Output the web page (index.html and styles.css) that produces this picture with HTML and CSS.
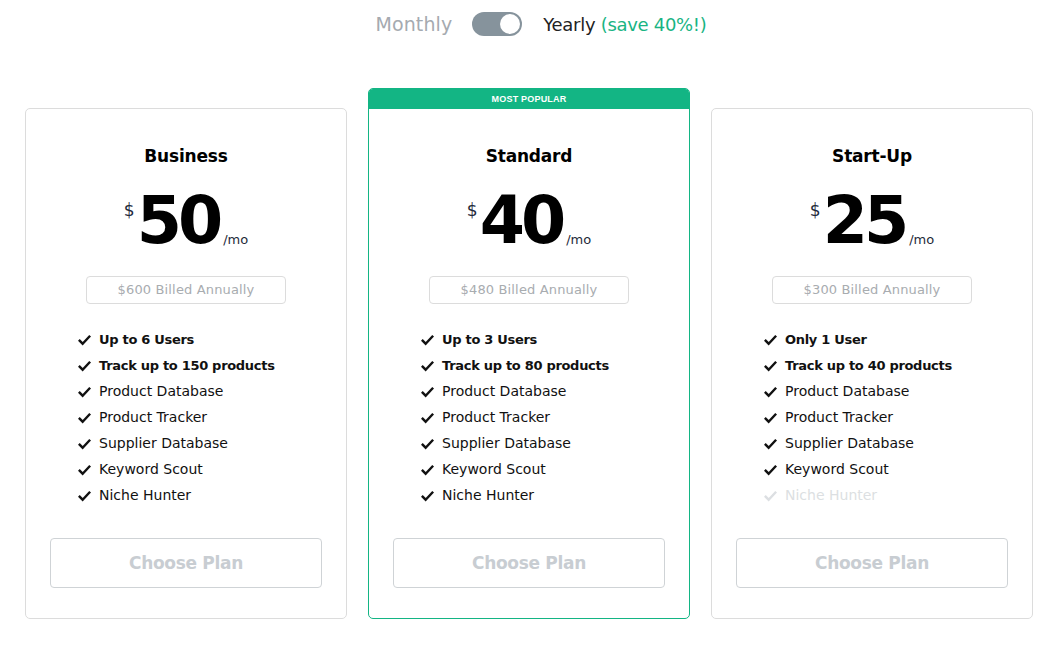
FILE: index.html
```html
<!DOCTYPE html>
<html>
<head>
<meta charset="utf-8">
<link rel="stylesheet" href="styles.css">
</head>
<body>
<div class="page">
  <div class="toggle-row">
    <span class="opt off">Monthly</span>
    <span class="switch"><span class="knob"></span></span>
    <span class="opt on">Yearly <span class="save">(save 40%!)</span></span>
  </div>
  <div class="cards">
    <div class="card">
      <div class="card-body">
        <h2 class="title">Business</h2>
        <div class="price"><span class="cur">$</span><span class="amt">50</span><span class="per">/mo</span></div>
        <div class="billed">$600 Billed Annually</div>
        <ul class="features">
          <li class="strong"><svg viewBox="0 0 16 16"><path d="M2 8.5 L6 12.5 L14 4"/></svg>Up to 6 Users</li>
          <li class="strong"><svg viewBox="0 0 16 16"><path d="M2 8.5 L6 12.5 L14 4"/></svg>Track up to 150 products</li>
          <li><svg viewBox="0 0 16 16"><path d="M2 8.5 L6 12.5 L14 4"/></svg>Product Database</li>
          <li><svg viewBox="0 0 16 16"><path d="M2 8.5 L6 12.5 L14 4"/></svg>Product Tracker</li>
          <li><svg viewBox="0 0 16 16"><path d="M2 8.5 L6 12.5 L14 4"/></svg>Supplier Database</li>
          <li><svg viewBox="0 0 16 16"><path d="M2 8.5 L6 12.5 L14 4"/></svg>Keyword Scout</li>
          <li><svg viewBox="0 0 16 16"><path d="M2 8.5 L6 12.5 L14 4"/></svg>Niche Hunter</li>
        </ul>
        <button class="choose">Choose Plan</button>
      </div>
    </div>
    <div class="card popular">
      <div class="banner">MOST POPULAR</div>
      <div class="card-body">
        <h2 class="title">Standard</h2>
        <div class="price"><span class="cur">$</span><span class="amt">40</span><span class="per">/mo</span></div>
        <div class="billed">$480 Billed Annually</div>
        <ul class="features">
          <li class="strong"><svg viewBox="0 0 16 16"><path d="M2 8.5 L6 12.5 L14 4"/></svg>Up to 3 Users</li>
          <li class="strong"><svg viewBox="0 0 16 16"><path d="M2 8.5 L6 12.5 L14 4"/></svg>Track up to 80 products</li>
          <li><svg viewBox="0 0 16 16"><path d="M2 8.5 L6 12.5 L14 4"/></svg>Product Database</li>
          <li><svg viewBox="0 0 16 16"><path d="M2 8.5 L6 12.5 L14 4"/></svg>Product Tracker</li>
          <li><svg viewBox="0 0 16 16"><path d="M2 8.5 L6 12.5 L14 4"/></svg>Supplier Database</li>
          <li><svg viewBox="0 0 16 16"><path d="M2 8.5 L6 12.5 L14 4"/></svg>Keyword Scout</li>
          <li><svg viewBox="0 0 16 16"><path d="M2 8.5 L6 12.5 L14 4"/></svg>Niche Hunter</li>
        </ul>
        <button class="choose">Choose Plan</button>
      </div>
    </div>
    <div class="card">
      <div class="card-body">
        <h2 class="title">Start-Up</h2>
        <div class="price"><span class="cur">$</span><span class="amt">25</span><span class="per">/mo</span></div>
        <div class="billed">$300 Billed Annually</div>
        <ul class="features">
          <li class="strong"><svg viewBox="0 0 16 16"><path d="M2 8.5 L6 12.5 L14 4"/></svg>Only 1 User</li>
          <li class="strong"><svg viewBox="0 0 16 16"><path d="M2 8.5 L6 12.5 L14 4"/></svg>Track up to 40 products</li>
          <li><svg viewBox="0 0 16 16"><path d="M2 8.5 L6 12.5 L14 4"/></svg>Product Database</li>
          <li><svg viewBox="0 0 16 16"><path d="M2 8.5 L6 12.5 L14 4"/></svg>Product Tracker</li>
          <li><svg viewBox="0 0 16 16"><path d="M2 8.5 L6 12.5 L14 4"/></svg>Supplier Database</li>
          <li><svg viewBox="0 0 16 16"><path d="M2 8.5 L6 12.5 L14 4"/></svg>Keyword Scout</li>
          <li class="disabled"><svg viewBox="0 0 16 16"><path d="M2 8.5 L6 12.5 L14 4"/></svg>Niche Hunter</li>
        </ul>
        <button class="choose">Choose Plan</button>
      </div>
    </div>
  </div>
</div>
</body>
</html>
```
FILE: styles.css
```css
* { box-sizing: border-box; }
html, body { margin: 0; padding: 0; background: #fff; }
body {
  font-family: "DejaVu Sans", "Open Sans", sans-serif;
  color: #000;
}
.page {
  width: 1057px;
  padding: 0 24px 0 25px;
}
.toggle-row {
  display: flex;
  align-items: center;
  justify-content: center;
  height: 48px;
  font-size: 18px;
  padding-left: 24px;
}
.opt.off { color: #a5aab0; font-size: 19px; letter-spacing: 0.1px; }
.opt.on { color: #222; letter-spacing: -0.3px; }
.save { color: #19b483; }
.switch {
  width: 50px;
  height: 24px;
  border-radius: 12px;
  background: #86939c;
  margin: 0 21px 0 20px;
  position: relative;
}
.knob {
  position: absolute;
  right: 2px;
  top: 2px;
  width: 20px;
  height: 20px;
  border-radius: 50%;
  background: #fff;
}
.cards {
  display: flex;
  gap: 21px;
  margin-top: 40px;
}
.card {
  width: 322px;
  margin-top: 20px;
  border: 1px solid #dcdcdc;
  border-radius: 5px;
  height: 511px;
}
.card.popular {
  margin-top: 0;
  height: 531px;
  border-color: #13b584;
  overflow: hidden;
}
.banner {
  height: 20px;
  background: #13b584;
  color: #fff;
  font-size: 9px;
  font-weight: 600;
  letter-spacing: 0.2px;
  text-align: center;
  line-height: 21px;
  font-family: "Liberation Sans", Arial, sans-serif;
}
.card-body {
  padding: 35px 24px 0 24px;
  display: flex;
  flex-direction: column;
  align-items: center;
}
.title {
  margin: 0;
  font-size: 17px;
  font-weight: 700;
  line-height: 24px;
  letter-spacing: -0.2px;
}
.price {
  display: flex;
  align-items: flex-start;
  margin-top: 16px;
  height: 89px;
}
.cur {
  font-size: 17px;
  margin-top: 16px;
  color: #1e2a3a;
  margin-right: 2px;
}
.amt {
  font-size: 65px;
  font-weight: 700;
  line-height: 73px;
  letter-spacing: -4px;
  margin-right: 4px;
}
.per {
  font-size: 13px;
  align-self: flex-end;
  margin-bottom: 26px;
  color: #1e2a3a;
}
.billed {
  width: 200px;
  height: 28px;
  margin-top: 3px;
  border: 1px solid #dcdcdc;
  border-radius: 4px;
  text-align: center;
  line-height: 26px;
  font-size: 13px;
  letter-spacing: 0.15px;
  color: #a8acb0;
}
.features {
  list-style: none;
  margin: 22px 0 0 0;
  padding: 0 0 0 27px;
  align-self: stretch;
}
.features li {
  display: flex;
  align-items: center;
  height: 26px;
  font-size: 14px;
  color: #111;
}
.features li.strong {
  font-weight: 700;
  font-size: 13px;
  letter-spacing: -0.3px;
}
.features li.disabled { color: #dcdfe2; }
.features svg {
  width: 15px;
  height: 15px;
  margin-right: 7px;
  flex: none;
}
.features svg path {
  fill: none;
  stroke: currentColor;
  stroke-width: 2.6;
}
.choose {
  margin-top: 30px;
  width: 272px;
  height: 50px;
  border: 1px solid #cfd3d6;
  border-radius: 4px;
  background: #fff;
  color: #c8cdd2;
  font-family: inherit;
  font-size: 17px;
  letter-spacing: -0.3px;
  font-weight: 700;
}
```
